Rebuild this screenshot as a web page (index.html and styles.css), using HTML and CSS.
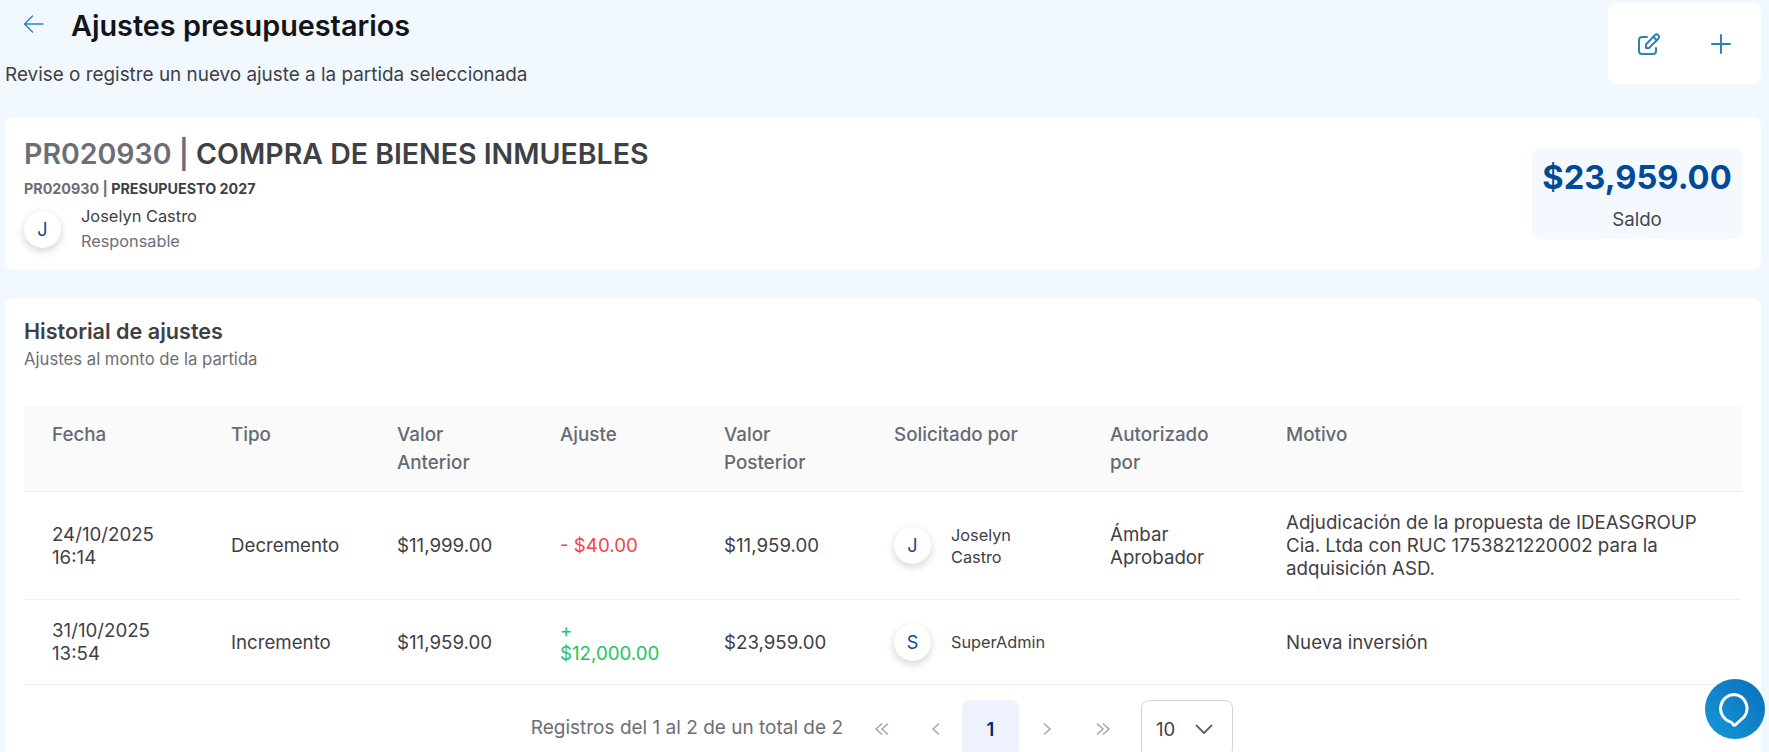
FILE: index.html
```html
<!DOCTYPE html>
<html lang="es">
<head>
<meta charset="UTF-8" />
<meta name="viewport" content="width=device-width, initial-scale=1" />
<title>Ajustes presupuestarios</title>
<link rel="stylesheet" href="styles.css">
</head>
<body>

<header class="page-head">
  <div class="head-text">
    <div class="head-title">
      <a href="#" class="back-link">
        <svg width="24" height="24" viewBox="0 0 24 24" fill="none" stroke="currentColor" stroke-width="1.5" stroke-linecap="round" stroke-linejoin="round"><path d="M21 12H3M10.500 4L2.500 12l8 8"/></svg>
      </a>
      <h1>Ajustes presupuestarios</h1>
    </div>
    <p class="head-sub">Revise o registre un nuevo ajuste a la partida seleccionada</p>
  </div>
  <div class="head-actions">
    <button type="button" class="icon-btn">
      <svg width="24" height="24" viewBox="0 0 24 24" fill="none" stroke="currentColor" stroke-width="2" stroke-linecap="round" stroke-linejoin="round"><path d="M10 5H5a3 3 0 0 0-3 3v11a3 3 0 0 0 3 3h11a3 3 0 0 0 3-3v-3"/><path d="M9 16h3l9.500-9.500a2.500 2.500 0 0 0-3.500-3.500L9 12.500V16z"/><path d="M16.500 5l3.500 3.500"/></svg>
    </button>
    <button type="button" class="icon-btn">
      <svg width="24" height="24" viewBox="0 0 24 24" fill="none" stroke="currentColor" stroke-width="2" stroke-linecap="round"><path d="M12 3v18M3 12h18"/></svg>
    </button>
  </div>
</header>

<section class="card summary">
  <div>
    <h2 class="summary-title"><span class="muted">PR020930 |</span> COMPRA DE BIENES INMUEBLES</h2>
    <div class="summary-code"><span class="muted">PR020930 |</span> PRESUPUESTO 2027</div>
    <div class="person">
      <span class="avatar">J</span>
      <div>
        <div class="person-name">Joselyn Castro</div>
        <div class="person-role">Responsable</div>
      </div>
    </div>
  </div>
  <div class="balance">
    <div class="balance-value">$23,959.00</div>
    <div class="balance-label">Saldo</div>
  </div>
</section>

<section class="card history">
  <h3>Historial de ajustes</h3>
  <p class="history-sub">Ajustes al monto de la partida</p>

  <table>
    <colgroup>
      <col class="c-fecha"><col class="c-tipo"><col class="c-ant"><col class="c-aj"><col class="c-post"><col class="c-sol"><col class="c-aut"><col>
    </colgroup>
    <thead>
      <tr>
        <th>Fecha</th>
        <th>Tipo</th>
        <th>Valor Anterior</th>
        <th>Ajuste</th>
        <th>Valor Posterior</th>
        <th>Solicitado por</th>
        <th>Autorizado por</th>
        <th>Motivo</th>
      </tr>
    </thead>
    <tbody>
      <tr class="row-tall">
        <td>24/10/2025 16:14</td>
        <td>Decremento</td>
        <td>$11,999.00</td>
        <td class="neg">- $40.00</td>
        <td>$11,959.00</td>
        <td><div class="person"><span class="avatar">J</span><span class="person-small">Joselyn Castro</span></div></td>
        <td>Ámbar Aprobador</td>
        <td>Adjudicación de la propuesta de IDEASGROUP Cia. Ltda con RUC 1753821220002 para la adquisición ASD.</td>
      </tr>
      <tr>
        <td>31/10/2025 13:54</td>
        <td>Incremento</td>
        <td>$11,959.00</td>
        <td class="pos">+ $12,000.00</td>
        <td>$23,959.00</td>
        <td><div class="person"><span class="avatar">S</span><span class="person-small">SuperAdmin</span></div></td>
        <td></td>
        <td>Nueva inversión</td>
      </tr>
    </tbody>
  </table>

  <div class="pager">
    <span class="pager-info">Registros del 1 al 2 de un total de 2</span>
    <a href="#" class="page-link"><svg width="16" height="16" viewBox="0 0 16 16" fill="none" stroke="currentColor" stroke-width="1.5"><path d="M8 2.500L2 8l6 5.500M14 2.500L8 8l6 5.500"/></svg></a>
    <a href="#" class="page-link prev"><svg width="16" height="16" viewBox="0 0 16 16" fill="none" stroke="currentColor" stroke-width="1.5"><path d="M11 2.500L5 8l6 5.500"/></svg></a>
    <a href="#" class="page-link active">1</a>
    <a href="#" class="page-link"><svg width="16" height="16" viewBox="0 0 16 16" fill="none" stroke="currentColor" stroke-width="1.5"><path d="M5 2.500L11 8l-6 5.500"/></svg></a>
    <a href="#" class="page-link"><svg width="16" height="16" viewBox="0 0 16 16" fill="none" stroke="currentColor" stroke-width="1.5"><path d="M2 2.500L8 8l-6 5.500M8 2.500L14 8l-6 5.500"/></svg></a>
    <div class="page-size">
      <span>10</span>
      <svg width="20" height="20" viewBox="0 0 20 20" fill="none" stroke="#5f6368" stroke-width="1.8" stroke-linecap="round" stroke-linejoin="round"><path d="M2.500 6.500l7.500 7.500 7.500-7.500"/></svg>
    </div>
  </div>
</section>

<a href="#" class="chat-btn">
  <svg width="36" height="36" viewBox="0 0 36 36" fill="none" stroke="#fff" stroke-width="3" stroke-linejoin="round"><path d="M17.500 3.500A14 14 0 0 0 13.500 30.900C15 31.300 15.500 32 15.800 33C16.200 34.300 17.300 34.600 18.300 33.800L27 26A14 14 0 0 0 17.500 3.500Z"/></svg>
</a>

</body>
</html>
```

FILE: styles.css
```css
html, body {
  height: 100%;
  overflow: hidden;
}
body {
  font-family: Inter, 'Noto Sans', sans-serif;
  margin: 0;
  background: #f1f8ff;
  color: #3f4044;
  font-size: 18.700px;
  padding: 3px 8px 0 5px;
  box-sizing: border-box;
}

/* cabecera */
.page-head {
  display: flex;
  justify-content: space-between;
  align-items: flex-start;
  height: 114px;
}
.head-title {
  display: flex;
  align-items: center;
  gap: 25px;
  padding-left: 17px;
  height: 44px;
}
.back-link {
  color: #2f86bd;
  display: flex;
  margin-bottom: 3px;
}
h1 {
  margin: 0;
  font-size: 28.800px;
  font-weight: 600;
  color: #141416;
}
.head-sub {
  margin: 16px 0 0;
  font-size: 18.900px;
  color: #3f4044;
}
.head-actions {
  width: 153px;
  height: 81px;
  box-sizing: border-box;
  background: white;
  border-radius: 8px;
  display: flex;
  align-items: center;
  gap: 48px;
  padding-left: 29px;
}
.icon-btn {
  background: none;
  border: none;
  padding: 0;
  color: #2f82b8;
  display: flex;
  cursor: pointer;
}

.card {
  background: white;
  border-radius: 8px;
}

/* resumen */
.summary {
  height: 153px;
  box-sizing: border-box;
  padding: 19px 19px 0;
  display: flex;
  justify-content: space-between;
  align-items: flex-start;
}
.muted {
  color: #6d6e75;
}
.summary-title {
  margin: 0;
  font-size: 28.500px;
  font-weight: 600;
  line-height: 36px;
  color: #3f4044;
}
.summary-code {
  font-size: 14.300px;
  font-weight: 700;
  line-height: 17px;
  margin-top: 8px;
  color: #3f4044;
}
.person {
  display: flex;
  align-items: center;
  gap: 20px;
}
.summary .person {
  margin-top: 7px;
}
.avatar {
  width: 37px;
  height: 37px;
  flex: none;
  border-radius: 50%;
  background: white;
  box-shadow: 0 3px 8px rgba(0,0,0,0.18);
  color: #0c4a94;
  display: flex;
  align-items: center;
  justify-content: center;
  font-size: 18px;
}
.person-name {
  font-size: 16.400px;
  line-height: 24px;
  color: #3f4044;
}
.person-role {
  font-size: 16.300px;
  line-height: 26px;
  color: #6d6e75;
}
.balance {
  width: 210px;
  height: 91px;
  margin-top: 12px;
  background: #f4f8ff;
  border-radius: 8px;
  text-align: center;
}
.balance-value {
  font-size: 32.700px;
  font-weight: 700;
  color: #024a97;
  margin-top: 6px;
  line-height: 46px;
}
.balance-label {
  font-size: 18.700px;
  margin-top: 8px;
  color: #47484c;
}

/* historial */
.history {
  margin-top: 28px;
  height: 500px;
  padding: 19px 19px 0;
  box-sizing: border-box;
}
.history h3 {
  margin: 0;
  font-size: 21.600px;
  font-weight: 600;
  line-height: 28px;
  color: #3f4044;
}
.history-sub {
  margin: 4px 0 0;
  font-size: 16.700px;
  line-height: 20px;
  color: #6d6e75;
}
table {
  width: 1718px;
  table-layout: fixed;
  border-collapse: collapse;
  margin-top: 37px;
}
.c-fecha { width: 179px; }
.c-tipo { width: 166px; }
.c-ant { width: 163px; }
.c-aj { width: 164px; }
.c-post { width: 170px; }
.c-sol { width: 216px; }
.c-aut { width: 176px; }
th {
  background: #fafafa;
  color: #646b74;
  font-weight: 500;
  font-size: 18.800px;
  line-height: 28px;
  text-align: left;
  vertical-align: top;
  padding: 15px 28px 14px;
  border-bottom: 1px solid #f0f0f0;
}
td {
  padding: 0 28px;
  height: 84px;
  line-height: 23px;
  border-bottom: 1px solid #f0f0f0;
  color: #3f4044;
  vertical-align: middle;
}
.row-tall td {
  height: 107px;
}
.neg { color: #f2444e; }
.pos { color: #22c55e; }
.person-small {
  font-size: 16.300px;
  line-height: 22px;
  width: 80px;
}

/* paginacion */
.pager {
  display: flex;
  align-items: flex-start;
  justify-content: flex-end;
  margin-top: 15px;
  padding-right: 509px;
}
.pager-info {
  color: #6d6e75;
  font-size: 19px;
  margin-top: 16px;
  margin-right: 11px;
}
.page-link {
  width: 56px;
  height: 57px;
  display: flex;
  align-items: center;
  justify-content: center;
  color: #a3a6ab;
  text-decoration: none;
  border-radius: 8px;
}
.page-link.prev {
  width: 52px;
}
.page-link.active {
  width: 57px;
  background: #eef2fd;
  color: #0b2a66;
  font-weight: 600;
  font-size: 18.500px;
}
.page-size {
  width: 92px;
  height: 57px;
  box-sizing: border-box;
  border: 1px solid #d4d4d8;
  border-radius: 8px;
  margin-left: 10px;
  display: flex;
  align-items: center;
  gap: 19px;
  padding: 0 14px;
  font-size: 18.500px;
}

.chat-btn {
  position: absolute;
  left: 1705px;
  top: 679px;
  width: 60px;
  height: 60px;
  border-radius: 50%;
  background: linear-gradient(225deg, #0b6dbd, #169ad5);
  display: flex;
  align-items: center;
  justify-content: center;
}
```
